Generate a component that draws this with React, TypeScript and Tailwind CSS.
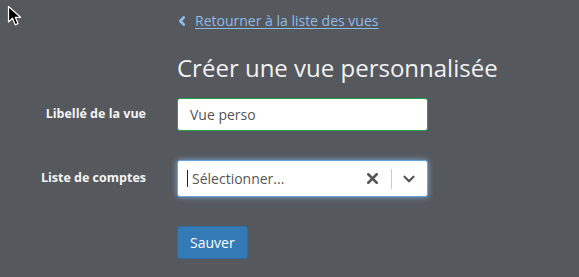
import { ChevronLeft, ChevronDown, X } from 'lucide-react'

function Cursor() {
  return (
    <svg className="absolute left-[7px] top-[5px]" width="16" height="22" viewBox="0 0 16 22">
      <path d="M1.5 1.5 L1.5 17 L5.5 13.2 L8.3 19.8 L11 18.6 L8.3 12.3 L13.6 12.3 Z" fill="#000" stroke="#fff" strokeWidth="1.2" strokeLinejoin="round" />
    </svg>
  )
}

export default function App() {
  return (
    <div
      className="relative h-[277px] w-[579px] overflow-hidden bg-[#55585d] text-[14px]"
      style={{ fontFamily: '"Open Sans", "Noto Sans", sans-serif' }}
    >
      <Cursor />
      <div className="pl-[175px] pt-[11px]">
        <a href="#" className="flex items-center gap-[6px] text-[14px] leading-[20px] text-[#8ebbe9]">
          <ChevronLeft size={14} strokeWidth={4.5} />
          <span className="underline underline-offset-2">Retourner à la liste des vues</span>
        </a>
      </div>
      <div className="pl-[177px]">
        <h1 className="mt-[21px] text-[24px] font-normal leading-[32px] text-[#f2f2f2]">Créer une vue personnalisée</h1>
      </div>

      <div className="mt-[14px] grid grid-cols-[146px_251px] items-center gap-x-[31px]">
        <label className="text-right text-[12.5px] font-bold text-[#f5f5f5]">Libellé de la vue</label>
        <div className="flex h-[33px] items-center rounded-[3px] border border-[#22a14a] bg-white px-[12px] text-[14px] text-[#555]">
          Vue perso
        </div>

        <label className="mt-[29px] text-right text-[12.5px] font-bold text-[#f5f5f5]">Liste de comptes</label>
        <div className="mt-[29px] flex h-[37px] items-center rounded-[3px] border border-[#66a3e0] bg-white shadow-[0_0_6px_rgba(140,190,240,0.75)]">
          <div className="flex flex-1 items-center pl-[9px] text-[14px] text-[#555]">
            <span className="mr-[4px] h-[17px] w-px bg-[#222]" />
            Sélectionner...
          </div>
          <X size={17} strokeWidth={3.6} className="mr-[10px] text-[#555]" />
          <span className="h-[20px] w-px bg-[#ccc]" />
          <ChevronDown size={18} strokeWidth={3} className="ml-[8px] mr-[9px] text-[#555]" />
        </div>
      </div>

      <div className="mt-[29px] pl-[177px]">
        <button
          type="button"
          className="h-[33px] rounded-[3px] border border-[#2e6da4] bg-[#337ab7] px-[12px] text-[14px] text-white"
        >
          Sauver
        </button>
      </div>
    </div>
  )
}
